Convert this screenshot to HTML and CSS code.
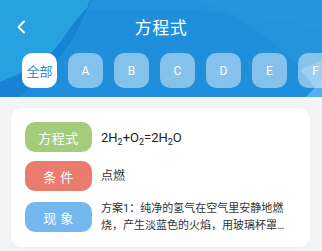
FILE: index.html
```html
<!DOCTYPE html>
<html lang="zh">
<head>
<meta charset="utf-8">
<link rel="stylesheet" href="styles.css">
</head>
<body>
<header class="header">
  <svg class="header-bg" width="322" height="97" viewBox="0 0 322 97" preserveAspectRatio="none">
    <rect width="322" height="97" fill="#1f8fdb"/>
    <path d="M0 0 H95 C80 14 70 28 62 40 C50 58 30 70 0 82 Z" fill="#27a1e0"/>
    <path d="M95 0 C80 14 70 28 62 40 C50 58 30 70 0 82 V97 H20 C40 80 60 60 72 40 C80 26 86 12 90 0 Z" fill="#1883d3"/>
    <path d="M90 0 H322 V30 C260 10 180 8 90 10 Z" fill="#2696dd" opacity="0.6"/>
    <path d="M200 0 C250 20 290 50 322 95 V0 Z" fill="#2b99df" opacity="0.5"/>
    <path d="M300 70 C310 80 316 90 322 97 V60 Z" fill="#4ea8ea"/>
    <path d="M306 97 L322 80 V97 Z" fill="#58aeec"/>
  </svg>
  <div class="topbar">
    <svg class="back" width="10" height="14" viewBox="0 0 10 14"><path d="M8 1.5 L2.5 7 L8 12.5" fill="none" stroke="#fff" stroke-width="2" stroke-linecap="round" stroke-linejoin="round"/></svg>
    <h1 class="title">方程式</h1>
  </div>
  <nav class="tabs">
    <span class="tab active">全部</span>
    <span class="tab">A</span>
    <span class="tab">B</span>
    <span class="tab">C</span>
    <span class="tab">D</span>
    <span class="tab">E</span>
    <span class="tab">F</span>
  </nav>
</header>
<main class="card">
  <div class="row">
    <span class="label green">方程式</span>
    <span class="value formula">2H<sub>2</sub>+O<sub>2</sub>=2H<sub>2</sub>O</span>
  </div>
  <div class="row">
    <span class="label red">条 件</span>
    <span class="value">点燃</span>
  </div>
  <div class="row">
    <span class="label blue">现 象</span>
    <span class="value clamp">方案1：纯净的氢气在空气里安静地燃烧，产生淡蓝色的火焰，用玻璃杯罩在火焰上方，杯壁上有水珠生成。</span>
  </div>
</main>
</body>
</html>
```
FILE: styles.css
```css
* { box-sizing: border-box; }
html, body { margin: 0; padding: 0; }
body {
  width: 322px;
  height: 251px;
  overflow: hidden;
  background: #f3f4f6;
  font-family: Roboto, "Noto Sans CJK SC", sans-serif;
  color: #333;
}
.header {
  position: relative;
  height: 97px;
  overflow: hidden;
}
.header-bg {
  position: absolute;
  left: 0;
  top: 0;
}
.topbar {
  position: relative;
  height: 53px;
  display: flex;
  align-items: center;
  justify-content: center;
}
.back {
  position: absolute;
  left: 16px;
  top: 20px;
}
.title {
  margin: 0;
  font-size: 17px;
  font-weight: 400;
  color: #fff;
  letter-spacing: 0.5px;
  font-family: "Noto Sans CJK SC", sans-serif;
}
.tabs {
  position: relative;
  display: flex;
  gap: 11px;
  padding-left: 22px;
}
.tab {
  flex-shrink: 0;
  width: 35px;
  height: 35px;
  border-radius: 10px;
  background: rgba(255, 255, 255, 0.45);
  color: #fff;
  font-size: 12px;
  display: flex;
  align-items: center;
  justify-content: center;
}
.tab.active {
  background: #fff;
  color: #2b8cd8;
  font-size: 13px;
  font-family: "Noto Sans CJK SC", sans-serif;
}
.card {
  margin: 11px 12px 0 11px;
  background: #fff;
  border-radius: 10px;
  padding: 14px 14px 13px 14px;
  display: flex;
  flex-direction: column;
  gap: 9px;
  box-shadow: 0 1px 3px rgba(0, 0, 0, 0.04);
}
.row {
  display: flex;
  align-items: center;
  gap: 9px;
}
.label {
  flex-shrink: 0;
  width: 67px;
  height: 30px;
  border-radius: 10px;
  color: #fff;
  font-size: 13px;
  display: flex;
  align-items: center;
  justify-content: center;
  font-family: "Noto Sans CJK SC", sans-serif;
  letter-spacing: 0.5px;
}
.green { background: #a3cd7b; }
.red { background: #e97c6e; }
.blue { background: #75b7ef; }
.value {
  font-size: 12px;
  line-height: 17px;
  color: #333;
  font-family: Roboto, "Noto Sans CJK SC", sans-serif;
}
.formula {
  font-size: 13px;
  font-family: Roboto, sans-serif;
  color: #222;
}
.formula sub {
  font-size: 9px;
  vertical-align: -3px;
  line-height: 0;
}
.clamp {
  flex: 1;
  min-width: 0;
  margin-right: 8px;
  font-size: 11px;
  display: -webkit-box;
  -webkit-box-orient: vertical;
  -webkit-line-clamp: 2;
  overflow: hidden;
}
```
